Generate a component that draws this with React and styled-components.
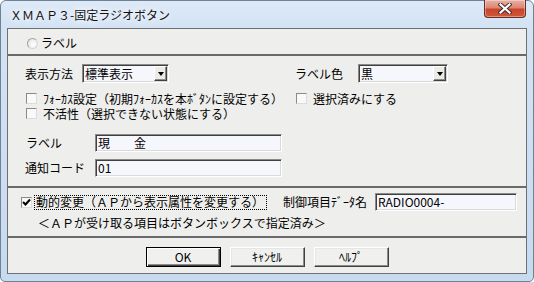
import React from 'react'
import styled, { createGlobalStyle } from 'styled-components'

const GlobalStyle = createGlobalStyle`
  html, body { margin: 0; padding: 0; }
  body {
    width: 534px;
    height: 282px;
    overflow: hidden;
    background: #ffffff;
    font-family: "Noto Sans CJK JP", "Noto Sans", sans-serif;
    font-size: 12px;
    line-height: 14px;
    color: #000;
  }
`

const App = () => {
  return (
    <>
      <GlobalStyle />
      <Window>
        <TitleBar>
          <Title>ＸＭＡＰ３-固定ラジオボタン</Title>
          <CloseButton>
            <svg width="14" height="11" viewBox="0 0 14 11">
              <path d="M2.5 1.5 L11.5 9.5 M11.5 1.5 L2.5 9.5" stroke="#3b2a28" strokeWidth="4" strokeLinecap="square" />
              <path d="M2.5 1.5 L11.5 9.5 M11.5 1.5 L2.5 9.5" stroke="#ffffff" strokeWidth="2.2" strokeLinecap="square" />
            </svg>
          </CloseButton>
        </TitleBar>
        <Client>
          <RadioRow>
            <Radio />
            <span>ラベル</span>
          </RadioRow>
          <Separator />
          <Options>
            <Row $h={19}>
              <Col $w={270}>
                <Label $w={57}>表示方法</Label>
                <Select $w={87}>
                  <span>標準表示</span>
                  <DropButton><Arrow /></DropButton>
                </Select>
              </Col>
              <Col>
                <Label $w={63}>ラベル色</Label>
                <Select $w={90}>
                  <span>黒</span>
                  <DropButton><Arrow /></DropButton>
                </Select>
              </Col>
            </Row>
            <Row $mt={8}>
              <Col $w={270}>
                <CheckItem>
                  <Check />
                  <span>ﾌｫｰｶｽ設定（初期ﾌｫｰｶｽを本ﾎﾞﾀﾝに設定する）</span>
                </CheckItem>
              </Col>
              <Col>
                <CheckItem>
                  <Check />
                  <span>選択済みにする</span>
                </CheckItem>
              </Col>
            </Row>
            <Row>
              <CheckItem>
                <Check />
                <span>不活性（選択できない状態にする）</span>
              </CheckItem>
            </Row>
            <Row $h={18} $mt={13}>
              <Label $w={70} $pl={1}>ラベル</Label>
              <TextInput $w={187}>現　　金</TextInput>
            </Row>
            <Row $h={18} $mt={7}>
              <Label $w={70}>通知コード</Label>
              <TextInput $w={187}>01</TextInput>
            </Row>
          </Options>
          <Separator />
          <Dynamic>
            <Row $h={18}>
              <Check>
                <svg width="9" height="9" viewBox="0 0 9 9">
                  <polyline points="1,4 3.5,6.5 8,1.5" fill="none" stroke="#000" strokeWidth="2" />
                </svg>
              </Check>
              <FocusRect>動的変更（ＡＰから表示属性を変更する）</FocusRect>
              <Label $w={92} $ml={16}>制御項目ﾃﾞｰﾀ名</Label>
              <TextInput $w={142}>RADIO0004-</TextInput>
            </Row>
            <Note>＜ＡＰが受け取る項目はボタンボックスで指定済み＞</Note>
          </Dynamic>
          <Separator />
          <ButtonBar>
            <PushButton $default>OK</PushButton>
            <PushButton>ｷｬﾝｾﾙ</PushButton>
            <PushButton>ﾍﾙﾌﾟ</PushButton>
          </ButtonBar>
        </Client>
      </Window>
    </>
  )
}

export default App

const Window = styled.div`
  width: 534px;
  height: 282px;
  box-sizing: border-box;
  display: flex;
  flex-direction: column;
  padding: 0 6px 7px 6px;
  border: 1px solid #6f8295;
  border-radius: 6px 6px 5px 5px;
  background: linear-gradient(to bottom, #dde9f7 0px, #d3e3f4 27px, #c6daf0 100%);
`

const TitleBar = styled.div`
  height: 27px;
  display: flex;
  justify-content: space-between;
  align-items: flex-start;
  padding-left: 3px;
`

const Title = styled.div`
  margin-top: 6px;
  line-height: 16px;
  font-size: 12px;
  color: #111;
  text-shadow: 0 0 6px #fff, 0 0 10px #fff;
`

const CloseButton = styled.div`
  width: 42px;
  height: 18px;
  margin-top: -1px;
  margin-right: 1px;
  box-sizing: border-box;
  display: flex;
  align-items: center;
  justify-content: center;
  border: 1px solid #6d2d24;
  border-top: none;
  border-radius: 0 0 4px 4px;
  background: linear-gradient(to bottom, #eab2a5 0%, #dc8572 45%, #c9442c 55%, #d0573a 100%);
  box-shadow: inset 0 0 0 1px rgba(255, 255, 255, 0.35);
`

const Client = styled.div`
  flex: 1;
  display: flex;
  flex-direction: column;
  background: #eeeeec;
  border: 1px solid #707070;
`

const Separator = styled.div`
  height: 2px;
  flex-shrink: 0;
  background: #6a6a6a;
`

const RadioRow = styled.div`
  height: 25px;
  box-sizing: border-box;
  padding: 3px 0 0 19px;
  display: flex;
  align-items: center;
  gap: 3px;
`

const Radio = styled.div`
  width: 11px;
  height: 11px;
  border-radius: 50%;
  box-sizing: border-box;
  border: 1px solid #a3a3a3;
  border-right-color: #d6d6d6;
  border-bottom-color: #d6d6d6;
  background: radial-gradient(circle at 60% 60%, #ffffff 0%, #f0f0f0 50%, #d8d8d8 100%);
`

const Options = styled.div`
  height: 130px;
  box-sizing: border-box;
  padding: 8px 0 9px 17px;
  display: flex;
  flex-direction: column;
`

const Dynamic = styled.div`
  height: 48px;
  box-sizing: border-box;
  padding: 5px 0 5px 13px;
  display: flex;
  flex-direction: column;
`

const Row = styled.div`
  display: flex;
  align-items: center;
  height: ${p => p.$h || 15}px;
  margin-top: ${p => p.$mt || 0}px;
  flex-shrink: 0;
`

const Col = styled.div`
  display: flex;
  align-items: center;
  flex-shrink: 0;
  width: ${p => (p.$w ? `${p.$w}px` : 'auto')};
`

const Label = styled.div`
  width: ${p => p.$w}px;
  padding-left: ${p => p.$pl || 0}px;
  margin-left: ${p => p.$ml || 0}px;
  box-sizing: border-box;
  flex-shrink: 0;
  white-space: nowrap;
`

const Select = styled.div`
  width: ${p => p.$w}px;
  height: 19px;
  box-sizing: border-box;
  display: flex;
  align-items: center;
  justify-content: space-between;
  padding: 0 0 0 2px;
  border: 1px solid;
  border-color: #8a8a8a #ffffff #ffffff #8a8a8a;
  box-shadow: inset 1px 1px 0 #404040, inset -1px -1px 0 #d8d8d8;
  background: #f6f6fd;
  white-space: nowrap;
  overflow: hidden;
`

const DropButton = styled.div`
  width: 13px;
  height: 15px;
  margin-right: 1px;
  box-sizing: border-box;
  display: flex;
  align-items: center;
  justify-content: center;
  background: #ecebe8;
  border: 1px solid;
  border-color: #ffffff #404040 #404040 #ffffff;
  box-shadow: inset -1px -1px 0 #8c8c8c;
`

const Arrow = styled.div`
  width: 0;
  height: 0;
  border-left: 3.5px solid transparent;
  border-right: 3.5px solid transparent;
  border-top: 4px solid #000;
  margin-top: 1px;
`

const CheckItem = styled.div`
  display: flex;
  align-items: center;
  gap: 6px;
  margin-left: 1px;
  white-space: nowrap;
`

const Check = styled.div`
  width: 11px;
  height: 11px;
  flex-shrink: 0;
  box-sizing: border-box;
  display: flex;
  align-items: center;
  justify-content: center;
  border: 1px solid;
  border-color: #8a8a8a #dcdcdc #dcdcdc #8a8a8a;
  background: #f9f9f9;
`

const TextInput = styled.div`
  width: ${p => p.$w}px;
  height: 18px;
  box-sizing: border-box;
  display: flex;
  align-items: center;
  padding-left: 2px;
  border: 1px solid;
  border-color: #8a8a8a #ffffff #ffffff #8a8a8a;
  box-shadow: inset 1px 1px 0 #404040, inset -1px -1px 0 #dadada;
  background: #f6f6fd;
  white-space: nowrap;
  overflow: hidden;
`

const FocusRect = styled.div`
  width: 233px;
  height: 15px;
  margin-left: 2px;
  box-sizing: border-box;
  display: flex;
  align-items: center;
  padding-left: 1px;
  border: 1px dotted #000;
  white-space: nowrap;
`

const Note = styled.div`
  height: 16px;
  margin-top: 4px;
  padding-left: 17px;
  display: flex;
  align-items: center;
  white-space: nowrap;
`

const ButtonBar = styled.div`
  flex: 1;
  display: flex;
  justify-content: center;
  align-items: flex-start;
  gap: 9px;
  padding-top: 9px;
`

const PushButton = styled.button`
  width: 75px;
  height: 20px;
  box-sizing: border-box;
  padding: 0;
  font-family: inherit;
  font-size: 12px;
  line-height: 14px;
  color: #000;
  background: #f0f0ef;
  border: 1px solid;
  border-color: ${p => (p.$default ? '#000' : '#ffffff #404040 #404040 #ffffff')};
  box-shadow: ${p =>
    p.$default
      ? 'inset 1px 1px 0 #ffffff, inset -1px -1px 0 #404040, inset -2px -2px 0 #8c8c8c'
      : 'inset -1px -1px 0 #8c8c8c, inset 1px 1px 0 #e6e6e6'};
  display: flex;
  align-items: center;
  justify-content: center;
`
